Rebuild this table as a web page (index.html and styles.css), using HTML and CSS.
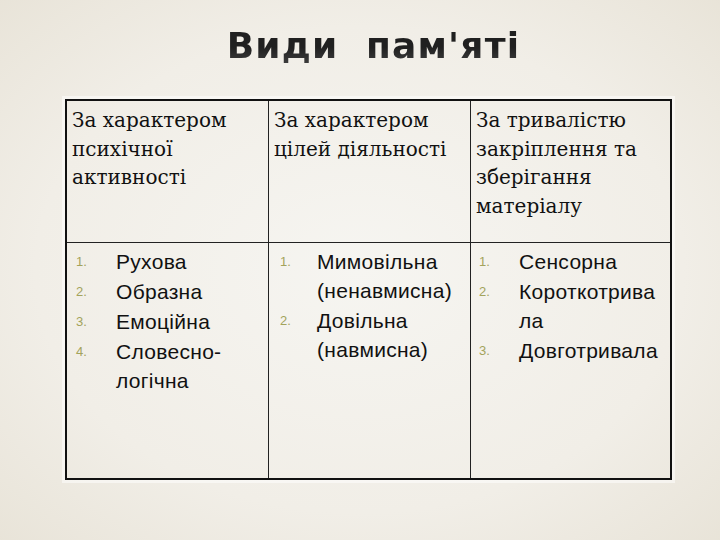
FILE: index.html
```html
<!DOCTYPE html>
<html lang="uk">
<head>
<meta charset="utf-8">
<link rel="stylesheet" href="styles.css">
</head>
<body>
<div class="slide">
  <h1 class="title">Види&nbsp; пам'яті</h1>
  <div class="table">
    <div class="cell head">За характером психічної активності</div>
    <div class="cell head">За характером цілей діяльності</div>
    <div class="cell head last">За тривалістю закріплення та зберігання матеріалу</div>
    <div class="cell body c1">
      <ol class="list">
        <li><span class="num">1.</span><span class="txt">Рухова</span></li>
        <li><span class="num">2.</span><span class="txt">Образна</span></li>
        <li><span class="num">3.</span><span class="txt">Емоційна</span></li>
        <li><span class="num">4.</span><span class="txt">Словесно-<br>логічна</span></li>
      </ol>
    </div>
    <div class="cell body c2">
      <ol class="list">
        <li><span class="num">1.</span><span class="txt">Мимовільна<br>(ненавмисна)</span></li>
        <li><span class="num">2.</span><span class="txt">Довільна<br>(навмисна)</span></li>
      </ol>
    </div>
    <div class="cell body c3 last">
      <ol class="list">
        <li><span class="num">1.</span><span class="txt">Сенсорна</span></li>
        <li><span class="num">2.</span><span class="txt">Короткотрива<br>ла</span></li>
        <li><span class="num">3.</span><span class="txt">Довготривала</span></li>
      </ol>
    </div>
  </div>
</div>
</body>
</html>
```
FILE: styles.css
```css
html, body {
  margin: 0;
  padding: 0;
}
body {
  width: 720px;
  height: 540px;
  overflow: hidden;
}
.slide {
  width: 720px;
  height: 540px;
  box-sizing: border-box;
  padding-top: 25px;
  background: radial-gradient(ellipse 75% 75% at 50% 50%, #f6f5f1 0%, #f1eee7 60%, #e7e2d6 100%);
}
.title {
  margin: 0 0 0 27px;
  height: 74px;
  text-align: center;
  font-family: "DejaVu Sans", sans-serif;
  font-weight: bold;
  font-size: 36px;
  line-height: 42px;
  letter-spacing: 1.2px;
  color: #333;
  background: linear-gradient(180deg, #202020 30%, #5a5a5a 75%);
  -webkit-background-clip: text;
  background-clip: text;
  -webkit-text-fill-color: transparent;
}
.table {
  margin-left: 65px;
  width: 607px;
  height: 381px;
  box-sizing: border-box;
  border: 2px solid #111;
  display: grid;
  grid-template-columns: 202px 202px 1fr;
  grid-template-rows: 142px 1fr;
  box-shadow: 0 0 0 3px rgba(255,255,255,0.5);
}
.cell {
  border-right: 1px solid #222;
  box-sizing: border-box;
  min-width: 0;
}
.cell.last {
  border-right: none;
}
.head {
  border-bottom: 1px solid #222;
  padding: 5px 4px 0 5px;
  font-family: "DejaVu Serif", serif;
  font-size: 20px;
  line-height: 28.5px;
  color: #111;
}
.body {
  padding-top: 3px;
  font-family: "Liberation Sans", Arial, sans-serif;
  font-size: 21px;
  line-height: 29px;
  color: #111;
}
.list {
  list-style: none;
  margin: 0;
  padding: 0;
}
.list li {
  display: flex;
  align-items: flex-start;
  white-space: nowrap;
  margin-top: 1px;
}
.num {
  font-size: 13px;
  line-height: 30px;
  height: 29px;
  color: #a3a35c;
  width: 40px;
  flex: none;
}
.c1 .list { padding-left: 9px; }
.c2 .list { padding-left: 11px; }
.c2 .num { width: 37px; }
.c3 .list { padding-left: 8px; }
.txt {
  letter-spacing: 0.3px;
}
```
